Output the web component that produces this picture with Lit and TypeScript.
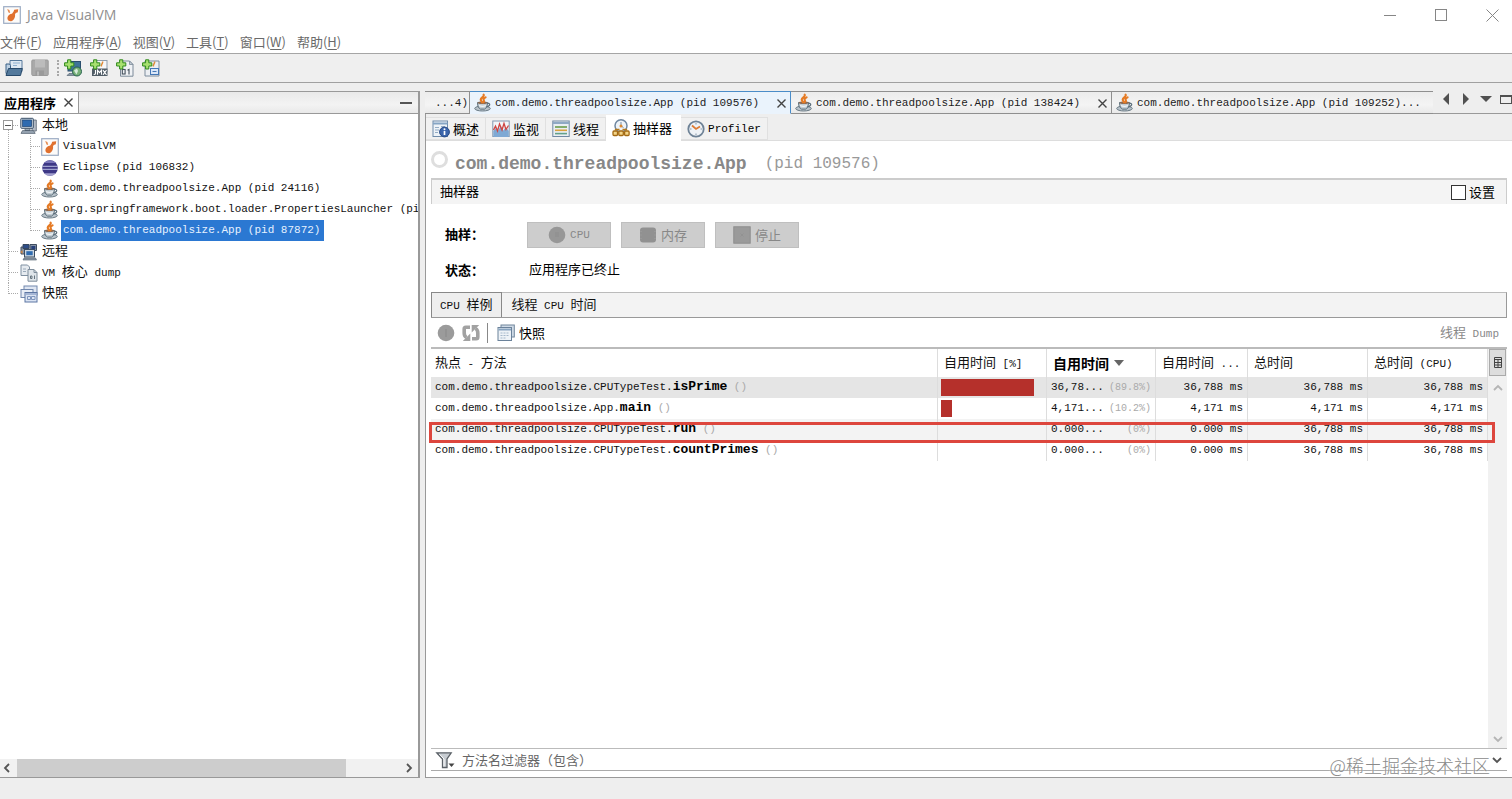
import { LitElement, html, css, svg, nothing, TemplateResult } from "lit";
import { customElement, property } from "lit/decorators.js";

/* Latin runs use the narrow monospace size, Chinese runs the larger one. */
const mixed = (text: string) =>
  text
    .split(/([\u3000-\u9fff\uff00-\uffef]+)/)
    .filter((part) => part !== "")
    .map((part) => (/[\u3000-\u9fff\uff00-\uffef]/.test(part) ? html`<span class="cj">${part}</span>` : part));

const plus = svg`<path d="M3.6 .8h3.2v3h3v3.2h-3v3H3.600v-3h-3V3.800h3z" fill="#a8e070" stroke="#2f8a1c" stroke-width="1"/>`;
const cup = svg`
  <ellipse cx="8.500" cy="14.500" rx="7.800" ry="2.500" fill="#b9c3cb" stroke="#5f707c" stroke-width=".9"/>
  <path d="M3.500 8.500h10c0 3.500-1.200 6-3 6.600h-4c-1.800-.6-3-3.100-3-6.600z" fill="#c3cdd4" stroke="#5d6f7b" stroke-width="1"/>
  <path d="M13.300 9.300c3-.5 3.600 2.500-.8 3.500" fill="none" stroke="#5d6f7b" stroke-width="1.300"/>
  <path d="M5 11.500c2 1 5 1 7 0" fill="none" stroke="#eef2f4" stroke-width="1.200"/>
  <ellipse cx="8.500" cy="8.800" rx="4.800" ry="1.300" fill="#8a6a55"/>
  <path d="M9.600.6c1.200 2-2.800 3-2.900 5 0 1.200.9 1.800 1.300 2.700M11.600 3.300c-1.800 1-2.600 2-1.700 3.200.4.600.2 1.200-.4 1.900" fill="none" stroke="#e57a24" stroke-width="2.100" stroke-linecap="round"/>`;
const vmMark = svg`
  <rect x=".7" y=".7" width="16.600" height="16.600" fill="#fdfbf9" stroke="#9cacc4" stroke-width="1.200"/>
  <path d="M4.200 3l2.200 1 .8 3-1.700-.4z" fill="#e58a50"/>
  <path d="M12 8.200C12.500 10.800 11 14.800 8 15.200C5 15.400 4 13 4.600 11C5.200 9 7.400 7.600 9 7.800L10.600 5.600L11.200 3.800L15.200 3.200L14.800 6.200L12.800 7z" fill="#e0702e"/>`;
const screen = svg`
  <path d="M12 3h4.300v11H12z" fill="#b4bcc6" stroke="#5c6672" stroke-width=".8"/>
  <rect x=".8" y="1.300" width="12.500" height="10" rx=".8" fill="#ccd5de" stroke="#3a4f68"/>
  <rect x="2.600" y="3" width="9" height="6.500" fill="#2f6bb0" stroke="#1c4474" stroke-width=".7"/>
  <path d="M5 11.500h5v2H5zM2.500 13.600h11l1.700 2.800H1z" fill="#9aa7b5" stroke="#4c5a69" stroke-width=".7"/>`;

const art: Record<string, TemplateResult> = {
  visualvm: vmMark,
  open: svg`
    <path d="M5 1.500h12v11H5z" fill="#dfe9f2" stroke="#56799c"/>
    <path d="M8 4h7M8 6.500h4" stroke="#8fb0cf"/>
    <path d="M1 5h3.500l1 1.500v8H1z" fill="#bdd0e2" stroke="#3a6186"/>
    <path d="M3.500 9.500h13.800l-1.800 7H1z" fill="#53799c" stroke="#284a6b"/>`,
  save: svg`
    <rect x=".8" y="1" width="16.400" height="15.500" rx="1" fill="#a9a9a9" stroke="#9a9a9a"/>
    <rect x="4" y="1" width="10" height="7.500" fill="#bcbcbc"/>
    <rect x="4.500" y="11.500" width="8.500" height="5" fill="#9a9a9a"/>
    <rect x="6" y="12.500" width="2" height="4" fill="#bababa"/>`,
  addRemote: svg`
    <rect x="4" y="2.500" width="12.500" height="9.500" fill="#3f7398" stroke="#2a4e6e"/>
    <path d="M5 14.500h9v2H3z" fill="#8797a5" stroke="#4b5b69" stroke-width=".6"/>
    <circle cx="13" cy="12.500" r="4.500" fill="#78b078" stroke="#27634e"/>
    <path d="M10 11.500l3-2 1 2.500-1.500 3.500z" fill="#d7ebdb"/>${plus}`,
  addJmx: svg`
    <rect x="5" y="1.500" width="12" height="11" fill="#f6f7f9" stroke="#8f9dac"/>
    <path d="M12.500 2.500c1 2-2 2.500-1 5" fill="none" stroke="#e08a3a" stroke-width="1.500"/>
    <rect x="2" y="9.500" width="15.500" height="7.500" fill="#505c66"/>
    <path d="M5.500 11v3.500q0 1-1.800 1M7.500 15.800v-4.600l2 2.500 2-2.500v4.600M13 11.200l3.500 4.600M16.500 11.200L13 15.800" fill="none" stroke="#fff" stroke-width="1.100"/>${plus}`,
  addDump: svg`
    <path d="M4.500 2h9l3.500 3.500v11.700H4.500z" fill="#f0f2f5" stroke="#7c8a99"/>
    <path d="M13.500 2v3.500H17z" fill="#c6ced6" stroke="#7c8a99" stroke-width=".8"/>
    <rect x="6.300" y="10.500" width="2.800" height="4.500" fill="none" stroke="#44505c" stroke-width="1.100"/>
    <path d="M11.500 11.200l1.500-.8v5" fill="none" stroke="#44505c" stroke-width="1.100"/>${plus}`,
  addSnapshot: svg`
    <path d="M3 2h14v15H3z" fill="#eceff3" stroke="#7d8c9c"/>
    <path d="M12.500 2.500c1 2-2 2.500-1 5" fill="none" stroke="#e08a3a" stroke-width="1.500"/>
    <rect x="8.500" y="9.500" width="8" height="6" fill="#dbe7f8" stroke="#4477b5"/>
    <path d="M10.500 12.500h4" stroke="#4477b5"/>${plus}`,
  local: screen,
  remote: svg`
    <path d="M1 4h7v7H1zM10 1.500h6.500v6H10z" fill="#8794a5" stroke="#3f4d60"/>
    <path d="M3 1.500h6v4H3z" fill="#2d4d88" stroke="#37475e"/>
    <rect x="11.300" y="3" width="4" height="3" fill="#27407a"/>
    <path d="M.5 9l2-2v4z" fill="#d9853b"/>
    <rect x="4.500" y="6.500" width="10" height="7.500" fill="#ccd6e0" stroke="#3b4c61"/>
    <rect x="6.300" y="8.200" width="6.400" height="4" fill="#2f6bb0"/>
    <path d="M4 15h11.500l1 2H3z" fill="#8f9baa" stroke="#4c5a69" stroke-width=".6"/>`,
  dump: svg`
    <path d="M1 1h6.500l2 2v8.500H1z" fill="#e6ebf0" stroke="#7f90a1"/>
    <path d="M3 5h3M3 7.500h3" stroke="#9aaaba"/>
    <path d="M8 5.500h6l3 3v8.700H8z" fill="#dfe5ea" stroke="#7f8d9b"/>
    <path d="M14 5.500v3h3" fill="none" stroke="#7f8d9b"/>
    <path d="M10.500 12h1.500v2.500h-1.500zM14.500 11.500v3.500" fill="none" stroke="#66747f"/>`,
  snapshots: svg`
    <rect x="4" y="1" width="13" height="9" fill="#dfe6f2" stroke="#7288ae"/>
    <rect x="1" y="4.500" width="12" height="8" fill="#e8edf6" stroke="#7288ae"/>
    <rect x="5" y="7.500" width="12" height="9.500" fill="#dbe4f3" stroke="#5d76a3"/>
    <path d="M5.500 9h11" stroke="#93a7cb" stroke-width="1.500"/>
    <path d="M7.500 14.500v-3h3v3zm4 0v-3h3.500v3z" fill="none" stroke="#7f95bd"/>`,
  eclipse: svg`
    <circle cx="9" cy="9" r="7.800" fill="#3d3886"/>
    <path d="M3 4a7.800 7.800 0 0 1 12 0z" fill="#7a76b9"/>
    <path d="M1.500 7.300h15M1.200 10.300h15.600" stroke="#b9bee2" stroke-width="1"/>
    <path d="M3.200 14.200a7.800 7.800 0 0 0 11.600 0z" fill="#a3a1cf"/>`,
  java: cup,
  overview: svg`
    <rect x="1" y="1" width="14.500" height="15.500" fill="#eef3f8" stroke="#6f8cab"/>
    <path d="M1 3.500h14.500" stroke="#86a5c4" stroke-width="2"/>
    <path d="M3 7.500h4M3 10h4M3 12.500h3M9 6.500h4" stroke="#93acc5"/>
    <circle cx="12.500" cy="12" r="4.900" fill="#3b65ac" stroke="#284a86"/>
    <path d="M12.500 11v4" stroke="#fff" stroke-width="1.700"/><circle cx="12.500" cy="9.200" r="1" fill="#fff"/>`,
  monitor: svg`
    <rect x=".8" y="1" width="16.400" height="15.500" fill="#f3f5f8" stroke="#8298b0"/>
    <path d="M1.300 11l2.500-3 2 3 3-5 2.500 4.500 2.500-3.500 3 4v6H1.300z" fill="#7fa9d4"/>
    <path d="M1.500 10l2-4 2 5 2-7 2.500 6 2-6.500 2 6 2.500-4" fill="none" stroke="#cf4643" stroke-width="1.300"/>`,
  threads: svg`
    <rect x=".8" y="1" width="16.400" height="15.500" fill="#e9eef3" stroke="#7089a3"/>
    <path d="M1 3h16" stroke="#8fa9c4" stroke-width="2"/>
    <path d="M3 7h12" stroke="#6a9d4a" stroke-width="1.600"/>
    <path d="M3 10.300h12" stroke="#dba13c" stroke-width="1.600"/>
    <path d="M3 13.600h12" stroke="#64a18b" stroke-width="1.600"/>`,
  sampler: svg`
    <circle cx="9" cy="6.800" r="6" fill="#eef3f8" stroke="#6f87a1" stroke-width="1.500"/>
    <path d="M9 3v4l2.500 1.500" fill="none" stroke="#7a90a8"/>
    <circle cx="9" cy="7" r="1.500" fill="#dd8a2f"/>
    <path d="M3.500 11.500v-1h4M14.500 11.500v-1h-4" fill="none" stroke="#b47a1c" stroke-width="1.300"/>
    <rect x="1" y="12" width="4.500" height="4.500" rx="1" fill="#f3d588" stroke="#a46a12" stroke-width="1.300"/>
    <rect x="6.800" y="12" width="4.500" height="4.500" rx="1" fill="#f3d588" stroke="#a46a12" stroke-width="1.300"/>
    <rect x="12.600" y="12" width="4.500" height="4.500" rx="1" fill="#f3d588" stroke="#a46a12" stroke-width="1.300"/>`,
  profiler: svg`
    <circle cx="9" cy="9" r="7.700" fill="#eef2f6" stroke="#6e8296" stroke-width="1.800"/>
    <path d="M9 3v1.500M9 13.500V15M3 9h1.500M13.500 9H15" stroke="#8496a8"/>
    <path d="M5 5.500L9 9l4-2.500" fill="none" stroke="#dd7b34" stroke-width="1.800"/>`,
  cpu: svg`<circle cx="9" cy="9" r="8.300" fill="#979797"/><path d="M7 6h4v5H7z" fill="#929292"/>`,
  memory: svg`<rect x="1" y="1.500" width="16" height="15" rx="3" fill="#919191"/><path d="M1 5.500h2M1 9h2M1 12.500h2M15 5.500h2M15 9h2M15 12.500h2" stroke="#999"/>`,
  stop: svg`<rect x=".8" y=".8" width="16.400" height="16.400" fill="#9a9a9a" stroke="#8d8d8d"/><path d="M7.500 7.500l3 3M10.500 7.500l-3 3" stroke="#929292"/>`,
  pause: svg`<circle cx="9" cy="9" r="8.300" fill="#9b9b9b"/><path d="M8 5h2v8H8z" fill="#929292"/>`,
  refresh: svg`
    <path d="M8 3.200H3.800C2.500 3.200 2.200 4 2.200 5v4c0 2 .6 3.600 2.300 4.500" fill="none" stroke="#a2a2a2" stroke-width="3.600"/>
    <path d="M10 14.800h4.200c1.300 0 1.600-.8 1.600-1.800V9c0-2-.6-3.600-2.300-4.500" fill="none" stroke="#a2a2a2" stroke-width="3.600"/>
    <path d="M8.300 9.500v7.500H.8zM9.700 8.500V1h7.500z" fill="#a2a2a2"/>`,
  snapshot: svg`
    <rect x="4" y="1" width="13.300" height="12" fill="#cfdae6" stroke="#71869c"/>
    <rect x="1" y="3.500" width="13.500" height="13" fill="#edf2f7" stroke="#6b829a"/>
    <path d="M1.500 5.500h12.500" stroke="#88a4c0" stroke-width="2"/>
    <path d="M3.500 9h8.500M3.500 11.500h8.500M3.500 14h5" stroke="#a5b8cb" stroke-dasharray="2 1"/>`,
  filter: svg`
    <path d="M.8 1.800h14.400L11 8v8.500H6.500V8z" fill="#c8cdd2" stroke="#5b6167" stroke-width="1.300"/>
    <path d="M3.500 3.300l4.500 4.700v7.500" fill="none" stroke="#fff"/>
    <path d="M12.500 12.500h6l-3 3.500z" fill="#444"/>`,
};

@customElement("vm-icon")
export class VmIcon extends LitElement {
  @property() name = "";
  static styles = css`
    :host { display: block; flex: none; width: 18px; height: 18px; }
    svg { display: block; width: 18px; height: 18px; overflow: visible; }
  `;
  render() {
    return html`<svg viewBox="0 0 18 18" aria-hidden="true">${art[this.name] ?? nothing}</svg>`;
  }
}

interface Node { icon: string; label: string; depth: number; last?: boolean; first?: boolean; selected?: boolean; }

const nodes: Node[] = [
  { icon: "local", label: "本地", depth: 0, first: true },
  { icon: "visualvm", label: "VisualVM", depth: 1 },
  { icon: "eclipse", label: "Eclipse (pid 106832)", depth: 1 },
  { icon: "java", label: "com.demo.threadpoolsize.App (pid 24116)", depth: 1 },
  { icon: "java", label: "org.springframework.boot.loader.PropertiesLauncher (pi", depth: 1 },
  { icon: "java", label: "com.demo.threadpoolsize.App (pid 87872)", depth: 1, last: true, selected: true },
  { icon: "remote", label: "远程", depth: 0 },
  { icon: "dump", label: "VM 核心 dump", depth: 0 },
  { icon: "snapshots", label: "快照", depth: 0, last: true },
];

const menus = [["文件", "F"], ["应用程序", "A"], ["视图", "V"], ["工具", "T"], ["窗口", "W"], ["帮助", "H"]];

const views = [
  { icon: "overview", label: "概述" },
  { icon: "monitor", label: "监视" },
  { icon: "threads", label: "线程" },
  { icon: "sampler", label: "抽样器" },
  { icon: "profiler", label: "Profiler" },
];

const rows = [
  { path: "com.demo.threadpoolsize.CPUTypeTest.", method: "isPrime", share: 89.8, self: "36,78...", pct: "(89.8%)", cpu: "36,788 ms", total: "36,788 ms", totalCpu: "36,788 ms" },
  { path: "com.demo.threadpoolsize.App.", method: "main", share: 10.2, self: "4,171...", pct: "(10.2%)", cpu: "4,171 ms", total: "4,171 ms", totalCpu: "4,171 ms" },
  { path: "com.demo.threadpoolsize.CPUTypeTest.", method: "run", share: 0, self: "0.000...", pct: "(0%)", cpu: "0.000 ms", total: "36,788 ms", totalCpu: "36,788 ms", marked: true },
  { path: "com.demo.threadpoolsize.CPUTypeTest.", method: "countPrimes", share: 0, self: "0.000...", pct: "(0%)", cpu: "0.000 ms", total: "36,788 ms", totalCpu: "36,788 ms" },
];

const cross = html`<svg class="cross" viewBox="0 0 9 9" aria-hidden="true"><path d="M.5 .5l8 8M8.500 .5l-8 8" /></svg>`;
const chevron = (dir: string) => html`<svg class="chev ${dir}" viewBox="0 0 10 10" aria-hidden="true"><path d="M1 7l4-4 4 4" /></svg>`;

@customElement("app-root")
export class AppRoot extends LitElement {
  static styles = css`
    :host {
      display: flex; flex-direction: column; height: 100vh; overflow: hidden; position: relative;
      background: #eee; color: #1c1c1c;
      font: 11px/20px "Liberation Mono", "Noto Sans CJK SC", monospace;
    }
    * { box-sizing: border-box; }
    button, input { font: inherit; color: inherit; border: 0; background: none; padding: 0; margin: 0; }
    .cj { font: 13px/20px "Noto Sans CJK SC", sans-serif; }
    .grow { flex: 1; min-width: 0; }

    .titlebar { display: flex; align-items: center; height: 30px; padding: 0 13px 0 3px; gap: 6px; background: #fff; color: #909090; font: 14px/20px "Open Sans", sans-serif; flex: none; }
    .caption { display: flex; gap: 38px; }
    .caption svg { display: block; width: 13px; height: 13px; fill: none; stroke: #868686; }
    .menubar { display: flex; height: 24px; gap: 11px; background: #fff; border-bottom: 1px solid #a5a5a5; color: #6a6a6a; font: 13px/24px "Noto Sans CJK SC", sans-serif; flex: none; }
    .menubar u { text-underline-offset: 2px; }
    .toolbar { display: flex; align-items: center; height: 29px; padding: 0 5px; gap: 8px; background: #efefef; border-bottom: 1px solid #a0a0a0; flex: none; }
    .grip { width: 2px; height: 16px; border-left: 2px dotted #a8a8a8; margin-right: -3px; }
    .work { display: flex; flex: 1; min-height: 0; margin-top: 8px; gap: 5px; }

    .side { display: flex; flex-direction: column; width: 420px; flex: none; background: #fff; border: solid #999; border-width: 1px 2px 1px 0; }
    .sidehead { display: flex; height: 22px; background: linear-gradient(#e9e9e9, #f3f3f3 60%, #e9e9e9); border-bottom: 1px solid #999; padding-right: 6px; align-items: stretch; flex: none; }
    .sidetab { display: flex; align-items: center; gap: 8px; padding: 0 5px 0 4px; background: #fff; border-right: 1px solid #999; }
    .sidetab .cj { font-weight: 700; color: #000; }
    .minus { align-self: center; width: 12px; height: 2px; background: #555; }
    .cross { display: block; width: 9px; height: 9px; fill: none; stroke: #444; stroke-width: 1.400; flex: none; }
    .tree { list-style: none; margin: 0; padding: 1px 0 0; flex: 1; overflow: hidden; }
    .node { display: flex; height: 21px; align-items: center; white-space: pre; color: #111; }
    .guide { display: block; flex: none; height: 21px; stroke: #aaa; fill: none; shape-rendering: crispEdges; }
    .node vm-icon { margin-right: 2px; }
    .name { line-height: 21px; padding: 0 4px 0 2px; }
    .picked { background: #2b78d2; color: #e6f1ff; }
    .hscroll { display: flex; height: 18px; align-items: center; background: #f1f1f1; padding: 0 4px 0 2px; flex: none; }
    .lane { flex: 1; height: 100%; padding: 0 58px 0 5px; }
    .thumb { height: 100%; background: #cdcdcd; }
    .chev { display: block; width: 10px; height: 10px; fill: none; stroke: #555; stroke-width: 1.800; flex: none; }
    .left { transform: rotate(-90deg); }
    .right { transform: rotate(90deg); }
    .down { transform: rotate(180deg); }

    .main { display: flex; flex-direction: column; flex: 1; min-width: 0; }
    .docs { display: flex; height: 23px; flex: none; }
    .doc { display: flex; align-items: center; flex: 0 1 321px; min-width: 0; gap: 3px; padding: 1px 4px 0 4px; border: solid #8f8f8f; border-width: 1px 1px 1px 0; background: linear-gradient(#ececec, #f4f4f4 60%, #e9e9e9); white-space: pre; overflow: hidden; }
    .doc .grow { text-align: left; }
    .doc.stub { flex: 0 0 45px; justify-content: flex-end; padding-right: 1px; }
    .doc.current { background: #eaf3fc; border-color: #4a8cc8; border-bottom-color: #eaf3fc; }
    .doc.open { border-right: 0; }
    .docnav { display: flex; flex: 1; align-items: flex-start; justify-content: flex-end; border-bottom: 1px solid #999; padding-top: 2px; gap: 8px; }
    .docnav svg { display: block; width: 12px; height: 12px; fill: #505050; }
    .frame { display: flex; flex-direction: column; flex: 1; min-height: 0; border: solid #999; border-width: 0 0 1px 1px; background: #fff; }
    .views { display: flex; align-items: flex-end; height: 27px; padding-left: 0; background: #eee; border-bottom: 1px solid #ddd; flex: none; }
    .view { display: flex; align-items: center; gap: 3px; height: 23px; padding: 0 6px 0 6px; background: #f1f1f1; border: 1px solid #e0e0e0; border-left: 0; color: #000; }
    .view .cj { line-height: 22px; }
    .view.on { height: 26px; background: #fff; border-color: #fff; margin-bottom: -1px; padding: 0 8px 0 6px; }
    .hero { display: flex; align-items: center; height: 37px; padding: 8px 0 0 5px; color: #888; flex: none; white-space: pre; }
    .ring { width: 17px; height: 17px; border: 3px solid #dedede; border-radius: 50%; margin: 0 7px 9px 0; }
    .appname { margin: 0; font-size: 18px; font-weight: 700; line-height: 24px; }
    .pid { font-size: 16px; line-height: 24px; margin-left: 18px; color: #999; }
    .body { display: flex; flex-direction: column; flex: 1; min-height: 0; margin: 0 5px 6px; }
    .section { display: flex; align-items: center; justify-content: space-between; height: 26px; padding: 0 11px 0 8px; background: #f4f4f4; border: solid #ccc; border-width: 2px 1px 0 1px; flex: none; color: #000; }
    .setting { display: flex; align-items: center; gap: 3px; }
    .setting input { appearance: none; width: 15px; height: 15px; border: 1px solid #333; background: #fff; }
    .controls { display: grid; grid-template-columns: 82px 1fr; row-gap: 10px; padding: 18px 0 8px 14px; align-items: center; flex: none; color: #000; }
    .controls b .cj { font-weight: 700; }
    .btns { display: flex; gap: 10px; }
    .btn { display: flex; align-items: center; justify-content: center; gap: 4px; width: 84px; height: 26px; background: #cdcdcd; border: 1px solid #bfbfbf; color: #888; }
    .state { padding-left: 2px; line-height: 26px; height: 26px; }
    .subtabs { display: flex; height: 26px; background: #f3f3f3; border: solid #999; border-width: 1px 1px 1px 0; border-top-color: #bbb; flex: none; color: #111; }
    .subtab { padding: 0 9px; white-space: pre; }
    .subtab.on { background: #eee; border: solid #888; border-width: 1px 1px 0 1px; margin-top: -1px; padding: 0 9px 0 8px; }
    .actions { display: flex; align-items: center; height: 29px; padding: 0 8px 0 6px; gap: 7px; flex: none; white-space: pre; }
    .rule { width: 1px; height: 20px; background: #888; margin-right: 2px; }
    .snap { display: flex; align-items: center; gap: 4px; color: #000; }
    .faded { color: #888; }

    .gridwrap { display: flex; flex: 1; min-height: 0; border: solid #bbb; border-width: 2px 0 1px; }
    .gridarea { flex: 1; min-width: 0; }
    table { width: 100%; border-collapse: separate; border-spacing: 0; table-layout: fixed; }
    th, td { padding: 0 4px; text-align: right; white-space: pre; overflow: hidden; border-right: 1px solid #ddd; font-weight: 400; }
    th { height: 28px; text-align: left; padding: 0 6px; color: #111; }
    th button { display: flex; align-items: center; gap: 5px; width: 100%; white-space: pre; }
    th:first-child, td:first-child { text-align: left; padding-left: 4px; }
    .sorted .cj { font-size: 14px; font-weight: 700; color: #000; }
    .sorted svg { width: 10px; height: 6px; fill: #666; }
    td { height: 21px; line-height: 21px; color: #111; }
    tr.hit td { background: #e5e5e5; }
    tr.marked { position: relative; }
    tr.marked td { background: #f3f3f3; }
    .method { font-size: 13px; font-weight: 700; line-height: 16px; color: #000; }
    .dim { color: #aaa; }
    td.barcell { padding: 0 1px 0 3px; }
    .bar { height: 17px; background: #b5302b; }
    .selftime { display: flex; justify-content: space-between; }
    .pct { font-size: 10px; color: #aaa; }
    .callout { position: absolute; inset: 3px -7px -3px -2px; border: 3px solid #dd463d; pointer-events: none; }
    .vbar { display: flex; flex-direction: column; align-items: center; width: 19px; background: #f1f1f1; padding-bottom: 4px; flex: none; }
    .vbar .chev { stroke: #b5b5b5; }
    .colpick { display: flex; align-items: center; justify-content: center; width: 17px; height: 27px; background: #ddd; border: 1px solid #aaa; margin-bottom: 7px; flex: none; }
    .colpick svg { width: 8px; height: 11px; fill: none; stroke: #444; }
    .filter { display: flex; align-items: center; height: 22px; padding: 0 5px; gap: 8px; border-bottom: 1px solid #aaa; flex: none; }
    .filter input { flex: 1; min-width: 0; height: 20px; outline: 0; font: 13px/20px "Noto Sans CJK SC", sans-serif; color: #444; }
    .filter input::placeholder { color: #666; opacity: 1; }
    .status { height: 21px; flex: none; }
    .watermark { position: absolute; right: 22px; bottom: 21px; font: 18px/26px "Noto Sans CJK SC", sans-serif; font-weight: 300; color: #8a8a8a; text-shadow: 0 0 2px #fff; }
  `;

  private guides(n: Node, i: number) {
    const end = i === nodes.length - 1;
    const dash = "1 1";
    if (n.depth === 0) {
      return html`<svg class="guide" width="20" height="21" aria-hidden="true">
        ${n.first
          ? svg`<rect x="3.500" y="5.500" width="9" height="9" stroke="#999"/><path d="M5 10h6" stroke="#555"/><path d="M8.500 15v6M13 10.500h6" stroke-dasharray=${dash}/>`
          : svg`<path d="M8.500 0v${end ? 11 : 21}M9 10.500h10" stroke-dasharray=${dash}/>`}
      </svg>`;
    }
    return html`<svg class="guide" width="41" height="21" aria-hidden="true">
      <path d="M8.500 0v21M30.500 0v${n.last ? 11 : 21}M31 10.500h9" stroke-dasharray=${dash} />
    </svg>`;
  }

  private docTab(pid: string, cls = "", closable = true) {
    return html`<div class="doc ${cls}">
      <vm-icon name="java"></vm-icon>
      <button class="grow">com.demo.threadpoolsize.App (pid ${pid})${closable ? "" : "..."}</button>
      ${closable ? html`<button aria-label="关闭">${cross}</button>` : nothing}
    </div>`;
  }

  render() {
    return html`
      <header class="titlebar">
        <vm-icon name="visualvm"></vm-icon>
        <span class="grow">Java VisualVM</span>
        <div class="caption">
          <button aria-label="最小化"><svg viewBox="0 0 13 13"><path d="M0 6.500h12" /></svg></button>
          <button aria-label="最大化"><svg viewBox="0 0 13 13"><rect x=".5" y=".5" width="11" height="11" /></svg></button>
          <button aria-label="关闭"><svg viewBox="0 0 13 13"><path d="M.5 .5l12 12M12.500 .5l-12 12" /></svg></button>
        </div>
      </header>
      <nav class="menubar">${menus.map(([t, k]) => html`<button>${t}(<u>${k}</u>)</button>`)}</nav>
      <div class="toolbar">
        <button aria-label="打开"><vm-icon name="open"></vm-icon></button>
        <button aria-label="保存" disabled><vm-icon name="save"></vm-icon></button>
        <span class="grip"></span>
        ${["addRemote", "addJmx", "addDump", "addSnapshot"].map((n) => html`<button aria-label=${n}><vm-icon name=${n}></vm-icon></button>`)}
      </div>

      <div class="work">
        <aside class="side">
          <div class="sidehead">
            <div class="sidetab">${mixed("应用程序")}<button aria-label="关闭">${cross}</button></div>
            <span class="grow"></span>
            <button class="minus" aria-label="最小化"></button>
          </div>
          <ul class="tree" role="tree">
            ${nodes.map((n, i) => html`<li class="node" role="treeitem" aria-selected=${n.selected ? "true" : "false"}>
              ${this.guides(n, i)}<vm-icon name=${n.icon}></vm-icon><span class="name ${n.selected ? "picked" : ""}">${mixed(n.label)}</span>
            </li>`)}
          </ul>
          <div class="hscroll">${chevron("left")}<div class="lane"><div class="thumb"></div></div>${chevron("right")}</div>
        </aside>

        <main class="main">
          <div class="docs">
            <div class="doc stub"><button>...4)</button></div>
            ${this.docTab("109576", "current")}${this.docTab("138424")}${this.docTab("109252", "open", false)}
            <div class="docnav">
              <button aria-label="向左"><svg viewBox="0 0 12 12"><path d="M9 0v12L3 6z" /></svg></button>
              <button aria-label="向右"><svg viewBox="0 0 12 12"><path d="M3 0v12l6-6z" /></svg></button>
              <button aria-label="列表"><svg viewBox="0 0 12 12"><path d="M0 3h12L6 9z" /></svg></button>
              <button aria-label="最大化"><svg viewBox="0 0 12 12"><path d="M0 2h12v9H0zM1 4v6h10V4z" fill-rule="evenodd" /></svg></button>
            </div>
          </div>
          <div class="frame">
            <div class="views">
              ${views.map((v) => html`<button class="view ${v.icon === "sampler" ? "on" : ""}"><vm-icon name=${v.icon}></vm-icon>${mixed(v.label)}</button>`)}
            </div>
            <div class="hero"><span class="ring"></span><h1 class="appname">com.demo.threadpoolsize.App</h1><span class="pid">(pid 109576)</span></div>
            <div class="body">
              <div class="section"><span>${mixed("抽样器")}</span><label class="setting"><input type="checkbox" />${mixed("设置")}</label></div>
              <div class="controls">
                <b>${mixed("抽样：")}</b>
                <div class="btns">
                  <button class="btn" disabled><vm-icon name="cpu"></vm-icon>CPU</button>
                  <button class="btn" disabled><vm-icon name="memory"></vm-icon>${mixed("内存")}</button>
                  <button class="btn" disabled><vm-icon name="stop"></vm-icon>${mixed("停止")}</button>
                </div>
                <b>${mixed("状态：")}</b>
                <span class="state">${mixed("应用程序已终止")}</span>
              </div>
              <div class="subtabs">
                <button class="subtab on">${mixed("CPU 样例")}</button>
                <button class="subtab">${mixed("线程 CPU 时间")}</button>
              </div>
              <div class="actions">
                <button disabled aria-label="暂停"><vm-icon name="pause"></vm-icon></button>
                <button disabled aria-label="刷新"><vm-icon name="refresh"></vm-icon></button>
                <span class="rule"></span>
                <button class="snap"><vm-icon name="snapshot"></vm-icon>${mixed("快照")}</button>
                <span class="grow"></span>
                <button class="faded" disabled>${mixed("线程 Dump")}</button>
              </div>
              <div class="gridwrap">
                <div class="gridarea">
                  <table>
                    <colgroup><col /><col width="109" /><col width="109" /><col width="92" /><col width="120" /><col width="120" /></colgroup>
                    <thead><tr>
                      <th>${mixed("热点 - 方法")}</th>
                      <th>${mixed("自用时间 [%]")}</th>
                      <th class="sorted" aria-sort="descending"><button>${mixed("自用时间")}<svg viewBox="0 0 10 6"><path d="M0 0h10L5 6z" /></svg></button></th>
                      <th>${mixed("自用时间 ...")}</th>
                      <th>${mixed("总时间")}</th>
                      <th>${mixed("总时间 (CPU)")}</th>
                    </tr></thead>
                    <tbody>
                      ${rows.map((r, i) => html`<tr class="${i === 0 ? "hit" : ""} ${r.marked ? "marked" : ""}">
                        <td>${r.path}<span class="method">${r.method}</span><span class="dim"> ()</span>${r.marked ? html`<span class="callout"></span>` : nothing}</td>
                        <td class="barcell">${r.share ? html`<div class="bar" style="width:${r.share}%"></div>` : nothing}</td>
                        <td><div class="selftime"><span>${r.self}</span><span class="pct">${r.pct}</span></div></td>
                        <td>${r.cpu}</td><td>${r.total}</td><td>${r.totalCpu}</td>
                      </tr>`)}
                    </tbody>
                  </table>
                </div>
                <div class="vbar">
                  <button class="colpick" aria-label="选择列"><svg viewBox="0 0 8 11"><path d="M.5 .5h7v10h-7zM.5 2.500h7M.5 5.500h7M.5 8h7M4 2.500v8" /></svg></button>
                  ${chevron("up")}<span class="grow"></span>${chevron("down")}
                </div>
              </div>
              <div class="filter">
                <vm-icon name="filter"></vm-icon>
                <input type="text" aria-label="方法名过滤器" placeholder="方法名过滤器（包含）" />
                ${chevron("down")}
              </div>
            </div>
          </div>
        </main>
      </div>
      <footer class="status"></footer>
      <div class="watermark">@稀土掘金技术社区</div>
    `;
  }
}
